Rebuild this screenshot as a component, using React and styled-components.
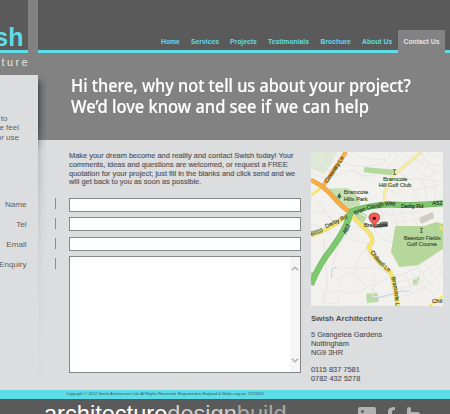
import React from "react";
import styled, { createGlobalStyle } from "styled-components";

const cyan = "#5ddde7";
const dark = "#5a5a5a";
const mid = "#828282";
const pale = "#dcdddf";

const Global = createGlobalStyle`
  *, *::before, *::after { box-sizing: border-box; }
  body { margin: 0; overflow: hidden; font-family: "Liberation Sans", Arial, sans-serif; }
  p, h1, h2 { margin: 0; font-weight: inherit; }
`;

const Page = styled.div`
  width: 450px;
  height: 414px;
  overflow: hidden;
  background: ${mid};
`;

const Columns = styled.div`
  display: grid;
  grid-template-columns: 38px 412px;
  grid-template-rows: 390px;
  height: 390px;
`;

const Side = styled.aside`
  display: flex;
  flex-direction: column;
  z-index: 1;
  min-width: 0;
`;

const Logo = styled.div`
  display: flex;
  justify-content: flex-end;
  width: 28px;
  height: 53px;
  padding: 23px 4.5px 0 0;
  overflow: hidden;
  background: ${dark};
  border-bottom: 3px solid ${cyan};
  color: ${cyan};
  font-size: 25px;
  line-height: 28px;
  font-weight: 700;
`;

const Tagline = styled.div`
  display: flex;
  justify-content: flex-end;
  width: 30px;
  height: 22px;
  padding-top: 3px;
  color: #e6e6e6;
  font-size: 10.8px;
  line-height: 12px;
  letter-spacing: 2.5px;
`;

const SidePanel = styled.div`
  position: relative;
  flex: 1;
  background: ${pale};
  color: #5c5d60;
  font-size: 8px;
  &::after {
    content: "";
    position: absolute;
    top: 2px;
    bottom: 0;
    left: 100%;
    width: 9px;
    background: linear-gradient(90deg, rgba(0, 0, 0, 0.4), rgba(0, 0, 0, 0.14) 45%, transparent);
    mask-image: linear-gradient(transparent, #000 8px, #000 50px, rgba(0, 0, 0, 0.35) 75px, rgba(0, 0, 0, 0.08) 190px, transparent);
  }
`;

const SideCopy = styled.div`
  display: flex;
  flex-direction: column;
  align-items: flex-end;
  width: 19px;
  height: 119px;
  padding-top: 39px;
  line-height: 9.4px;
  white-space: nowrap;
`;

const ShortLine = styled.span`
  margin-right: ${(p) => p.$inset || 0}px;
`;

const Label = styled.label`
  display: flex;
  justify-content: flex-end;
  align-items: center;
  width: 26.5px;
  height: 20px;
  font-size: 8.1px;
  white-space: nowrap;
`;

const Main = styled.main`
  display: flex;
  flex-direction: column;
  min-width: 0;
`;

const Header = styled.header`
  display: flex;
  justify-content: flex-end;
  align-items: flex-end;
  height: 53px;
  padding-right: 5px;
  background: linear-gradient(${dark} 50px, ${cyan} 50px);
`;

const Nav = styled.nav`
  display: flex;
  height: 23px;
  color: ${cyan};
  font-size: 6.8px;
  font-weight: 700;
  line-height: 23px;
  white-space: nowrap;
`;

const NavItem = styled.a`
  position: relative;
  width: ${(p) => p.$w}px;
  & + &::before {
    content: "";
    position: absolute;
    left: -6px;
    top: 9px;
    height: 6px;
    border-left: 1px solid #777;
  }
`;

const NavTab = styled.a`
  width: 47px;
  background: ${mid};
  color: #e3e3e3;
  text-align: center;
`;

const Hero = styled.section`
  height: 87px;
  padding: 22.4px 0 0 33px;
  color: #fff;
  font-family: "Noto Sans", sans-serif;
  font-size: 18.4px;
  font-weight: 500;
  line-height: 20.4px;
  white-space: nowrap;
  -webkit-text-stroke: 0.2px #fff;
`;

const HeroLine = styled.h1`
  width: max-content;
  font-size: inherit;
  transform: scaleX(${(p) => p.$fit});
  transform-origin: 0 0;
`;

const Content = styled.section`
  display: grid;
  grid-template-columns: 31px 232px 132px;
  flex: 1;
  min-height: 0;
  background: ${pale};
`;

const Ticks = styled.div`
  display: flex;
  flex-direction: column;
  gap: 9px;
  padding: 58px 0 0 17px;
`;

const Tick = styled.i`
  height: 11px;
  border-left: 1px solid #8b8c8e;
`;

const Form = styled.form`
  padding-top: 12px;
`;

const Intro = styled.p`
  height: 46px;
  color: #55565a;
  font-size: 7.45px;
  line-height: 8.75px;
  white-space: nowrap;
  -webkit-text-stroke: 0.15px #55565a;
`;

const Field = styled.div`
  height: 14px;
  margin-bottom: 5.4px;
  background: #fff;
  border: 1px solid #858688;
`;

const Area = styled.div`
  display: flex;
  justify-content: flex-end;
  height: 117px;
  background: #fff;
  border: 1px solid #858688;
`;

const Scrollbar = styled.div`
  display: flex;
  flex-direction: column;
  justify-content: space-between;
  align-items: center;
  width: 10px;
  padding: 9px 0 9px;
  background: #f6f6f6;
`;

const Contact = styled.div`
  width: 132px;
  margin-left: 10px;
  padding-top: 12px;
  color: #4f5053;
  font-size: 7.4px;
  line-height: 8.6px;
  white-space: nowrap;
`;

const MapFrame = styled.div`
  height: 154px;
  margin-bottom: 8.5px;
  svg { display: block; }
`;

const Company = styled.h2`
  margin-bottom: 8.4px;
  font-size: 7.95px;
  font-weight: 700;
`;

const Lines = styled.p`
  margin-bottom: 8.8px;
  &:last-child { margin-bottom: 0; }
  -webkit-text-stroke: 0.12px #4f5053;
`;

const Legal = styled.div`
  height: 8.5px;
  padding-left: 66px;
  background: ${cyan};
  color: #34565c;
  font-size: 4.02px;
  line-height: 8.5px;
  white-space: nowrap;
`;

const Footer = styled.footer`
  display: flex;
  height: 15.5px;
  overflow: hidden;
  background: ${dark};
`;

const Wordmark = styled.div`
  width: 358px;
  padding: 0 0 0 44px;
  font-size: 23.6px;
  line-height: 31px;
  color: #fff;
  white-space: nowrap;
`;

const Tone = styled.span`
  color: ${(p) => p.$c};
`;

const Social = styled.div`
  padding-top: 8px;
  svg { display: block; }
`;

const Arrow = ({ down }) => (
  <svg width="8" height="5" viewBox="0 0 8 5" fill="none" stroke="#aaa" strokeWidth="1.3">
    <path d={down ? "M1 .7 4 3.9 7 .7" : "M1 4.3 4 1.1 7 4.3"} />
  </svg>
);

const streets = [
  "M70 0 Q95 50 170 42 T235 0", "M120 0 Q150 25 225 22", "M130 62 Q180 90 230 45 T245 0", "M35 0 Q25 35 60 60",
  "M0 60 Q30 90 90 65 T155 88", "M250 90 Q310 70 390 90", "M262 55 Q300 90 320 140 T396 120", "M285 30 L350 75 L396 55",
  "M300 12 L370 60", "M330 0 L350 35 L396 40", "M345 0 L396 25", "M315 50 L340 18", "M335 65 L362 30", "M358 78 L385 38",
  "M230 110 Q285 135 285 155", "M335 85 L350 150", "M365 80 L375 148", "M310 115 L396 95", "M250 0 L285 30 M272 0 L306 25",
  "M0 185 Q40 165 65 205 T120 195", "M20 145 L70 220", "M0 215 L60 245", "M135 170 Q160 215 240 175", "M210 160 L215 225",
  "M240 160 L260 225 M270 165 L285 230 M300 165 L320 225", "M225 190 L330 178 M240 215 L330 198",
  "M40 260 Q35 300 45 345 T38 450", "M65 340 Q72 295 105 250 T150 235", "M100 250 Q135 270 175 275", "M190 230 Q205 275 265 270",
  "M165 290 Q125 330 135 355", "M170 290 Q175 350 235 365", "M85 350 L225 345", "M90 390 Q100 345 130 375 T180 400 T230 380",
  "M35 420 L82 418 L82 455 L35 452 Z", "M85 365 L85 415 Q130 435 170 405", "M110 365 Q145 355 155 400", "M190 365 L185 435 L250 430",
  "M255 370 Q300 365 345 325 L396 290", "M258 390 Q320 390 396 315", "M262 410 Q325 410 396 335",
  "M266 435 Q330 425 396 360", "M280 365 L310 420", "M300 360 L340 415", "M318 342 L365 405", "M335 328 L386 390", "M360 315 L396 360",
  "M375 300 L396 325", "M310 445 L345 405 L385 450", "M290 450 L300 425",
];

const Road = ({ d, c, w, e }) => (
  <g fill="none" strokeLinejoin="round">
    {e && <path d={d} stroke={e} strokeWidth={w + 3} />}
    <path d={d} stroke={c} strokeWidth={w} />
  </g>
);

const MapPicture = () => (
  <svg width="132" height="154" viewBox="0 0 396 462">
    <defs>
      <path id="clough" d="M130 186 Q165 168 200 161 T262 155" />
      <path id="coventry" d="M49 94 L112 0" />
      <path id="derby" d="M46 229 L115 195" />
      <path id="chilwell" d="M178 300 Q196 332 232 359" />
      <path id="bramcote" d="M241 376 Q252 410 254 470" />
    </defs>
    <rect width="396" height="462" fill="#f3f1ed" />
    <path d="M0 0H78L66 30 40 67 0 50Z" fill="#dfe8d6" />
    <path d="M0 82 30 98 45 110 110 108Q145 125 148 158L112 181 82 153 30 108Z" fill="#c7dfb5" />
    <path d="M140 175 170 190 155 220 130 210ZM165 425 200 422 203 450 168 453ZM305 385 326 374 321 398 307 402ZM0 360H10V374H0Z" fill="#b9dba4" />
    <path d="M323 198 365 180 370 198 331 215Z" fill="#d0cbc3" />
    <g fill="none" stroke="#d9d7d3" strokeWidth="3">{streets.map((d) => <path key={d} d={d} />)}</g>
    <g fill="none" stroke="#fff" strokeWidth="1.4">{streets.map((d) => <path key={d} d={d} />)}</g>
    <path d="M160 45 252 53 240 70 158 61Z" fill="#b4d99d" />
    <path d="M253 222H340L376 210 396 216V290L350 320 320 340 265 345 240 300Z" fill="#b5d79b" />
    <path d="M62 378V352Q68 346 78 347M195 440 272 417 296 417" fill="none" stroke="#bdd0e6" strokeWidth="3" />
    <Road d="M331 0 Q274 48 245 72 L220 122 223 156" c="#f7efa0" w={6} e="#e5dba0" />
    <Road d="M0 130 34 105" c="#f4e66b" w={8} />
    <Road d="M115 184 L165 232 Q190 258 182 274 L172 286 Q195 328 238 361 Q248 378 260 462" c="#f5e56b" w={10} e="#ded083" />
    <Road d="M0 250 Q55 235 115 185" c="#f4e66b" w={9} e="#ded083" />
    <Road d="M385 222 396 235M355 462 396 432" c="#f4e66b" w={7} />
    <Road d="M105 0 L32 108" c="#f7b450" w={9} e="#d99a45" />
    <Road d="M0 84 Q40 103 67 135 T119 181" c="#f9ac45" w={11} e="#d99743" />
    <Road d="M117 180 Q190 154 255 158 T396 154" c="#7fc66e" w={15} e="#64a956" />
    <Road d="M119 181 Q107 230 62 290 Q25 335 0 398" c="#7dc96e" w={15} e="#60ae57" />
    <g fill="#3f5a39" fontSize="17.5" fontFamily="Liberation Sans" stroke="#3f5a39" strokeWidth=".5">
      <text x="216" y="87" textLength="73">Bramcote</text>
      <text x="203" y="106" textLength="98">Hill Golf Club</text>
      <text x="98" y="127" textLength="74">Bramcote</text>
      <text x="98" y="146" textLength="72">Hills Park</text>
      <text x="278" y="263" textLength="111">Beeston Fields</text>
      <text x="287" y="282" textLength="91">Golf Course</text>
      <text x="363" y="453" fill="#333" fontSize="18">Chil</text>
    </g>
    <path d="M78 136 85 122 92 136H87V140H83V136Z" fill="#2f693b" />
    <path d="M246 53h10M250 54v12M246 67h10M327 229h9M331 230v11M327 241h9" stroke="#46583f" strokeWidth="2.5" />
    <g fontSize="17" fontFamily="Liberation Sans" fill="#26422a" strokeWidth=".5" stroke="#26422a">
      <text dy="4"><textPath href="#clough" textLength="128">Brian Clough Way</textPath></text>
      <text x="270" y="167" textLength="67">Derby Rd</text>
      <text x="364" y="160" textLength="30">A52</text>
      <text fill="#584414"><textPath href="#coventry">Coventry Ln</textPath></text>
      <text fill="#554d18"><textPath href="#derby">Derby Rd</textPath></text>
      <text x="0" y="251" transform="rotate(-18 0 251)" fill="#554d18">6010</text>
      <text x="105" y="247" transform="rotate(-64 105 247)">A52</text>
      <text fill="#554d18"><textPath href="#chilwell">Chilwell Ln</textPath></text>
      <text fill="#554d18"><textPath href="#bramcote">Bramcote L</textPath></text>
      <text x="159" y="225" textLength="72">Bramcote</text>
    </g>
    <path d="M190 226 209 211Q234 204 231 216T190 227Z" fill="#222" opacity=".6" />
    <path d="M190 228Q189 216 179 208C168 193 177 183 190 183S212 193 201 208Q191 216 190 228Z" fill="#f65d54" stroke="#8f342f" strokeWidth="2" />
    <circle cx="190" cy="199" r="5" fill="#26110f" />
  </svg>
);

const links = [["Home", 30], ["Services", 39], ["Projects", 38], ["Testimonials", 52.5], ["Brochure", 41.5], ["About Us", 36]];

export default function App() {
  return (
    <Page>
      <Global />
      <Columns>
        <Side>
          <Logo>swish</Logo>
          <Tagline>architecture</Tagline>
          <SidePanel>
            <SideCopy>
              <ShortLine $inset={11.5}>to</ShortLine>
              <ShortLine>e feel</ShortLine>
              <ShortLine>or use</ShortLine>
            </SideCopy>
            {["Name", "Tel", "Email", "Enquiry"].map((t) => <Label key={t}>{t}</Label>)}
          </SidePanel>
        </Side>
        <Main>
          <Header>
            <Nav>
              {links.map(([t, w]) => <NavItem key={t} $w={w}>{t}</NavItem>)}
              <NavTab>Contact Us</NavTab>
            </Nav>
          </Header>
          <Hero>
            <HeroLine $fit={0.883}>Hi there, why not tell us about your project?</HeroLine>
            <HeroLine $fit={0.895}>We’d love know and see if we can help</HeroLine>
          </Hero>
          <Content>
            <Ticks><Tick /><Tick /><Tick /><Tick /></Ticks>
            <Form>
              <Intro>
                Make your dream become and reality and contact Swish today! Your<br />
                comments, ideas and questions are welcomed, or request a FREE<br />
                quotation for your project; just fill in the blanks and click send and we<br />
                will get back to you as soon as possible.
              </Intro>
              <Field /><Field /><Field />
              <Area><Scrollbar><Arrow /><Arrow down /></Scrollbar></Area>
            </Form>
            <Contact>
              <MapFrame><MapPicture /></MapFrame>
              <Company>Swish Architecture</Company>
              <Lines>5 Grangelea Gardens<br />Nottingham<br />NG9 3HR</Lines>
              <Lines>0115 837 7581<br />0782 432 5278</Lines>
            </Contact>
          </Content>
        </Main>
      </Columns>
      <Legal>Copyright © 2012 Swish Architecture Ltd. All Rights Reserved. Registered in England &amp; Wales reg no: 7270623</Legal>
      <Footer>
        <Wordmark>architecture<Tone $c="#d0d0d0">design</Tone><Tone $c="#a9a9a9">build</Tone></Wordmark>
        <Social>
          <svg width="66" height="18" viewBox="0 0 66 18">
            <path d="M2 0H16Q18 0 18 2V18H0V2Q0 0 2 0Z" fill="#b2b2b2" />
            <circle cx="4.5" cy="4.5" r="1.5" fill={dark} />
            <path d="M3.3 7.5H5.7V18H3.3ZM8 7.5H10V9Q14 5.5 15.5 10V18H13V11Q11 8 10.2 11V18H8Z" fill={dark} />
            <path d="M37 0V3Q34 2.5 34 5V7H37L36.5 10H34V18H30V10H28V7H30V4Q30 0 37 0Z" fill="#b2b2b2" />
            <path d="M49 2Q49 0 51 0T53 2V5H59Q62 5 62 7T59 9H53V12Q53 14 56 14H61V18H55Q49 18 49 12Z" fill="#b2b2b2" />
          </svg>
        </Social>
      </Footer>
    </Page>
  );
}
